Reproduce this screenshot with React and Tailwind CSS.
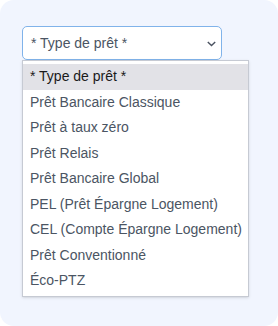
import React from 'react';

const options = [
  '* Type de prêt *',
  'Prêt Bancaire Classique',
  'Prêt à taux zéro',
  'Prêt Relais',
  'Prêt Bancaire Global',
  'PEL (Prêt Épargne Logement)',
  'CEL (Compte Épargne Logement)',
  'Prêt Conventionné',
  'Éco-PTZ',
];

const App = () => {
  return (
    <div className="min-h-screen bg-white font-['Liberation_Sans',Arial,sans-serif]">
      <div className="h-[326px] w-full rounded-[14px] bg-[#f1f5fe] pt-[26px] pl-[22px]">
        <div className="relative w-[200px]">
          <div className="flex h-[34px] items-center justify-between rounded-[5px] border border-[#80b3ea] bg-white pl-[8px] pr-[5px] text-[14px] text-[#4b5563]">
            <span>* Type de prêt *</span>
            <svg width="9" height="6" viewBox="0 0 9 6" fill="none" className="mt-[1px]">
              <path d="M0.8 1l3.7 3.6L8.2 1" stroke="#4a5260" strokeWidth="1.4" />
            </svg>
          </div>
          <div className="absolute left-0 top-[34px] w-[227px] border border-[#c6cad3] bg-white pt-[3px] pb-[2px] shadow-sm">
            {options.map((opt, i) => (
              <div
                key={opt}
                className={
                  i === 0
                    ? 'flex h-[25.5px] items-center bg-[#e2e2e7] pl-[7px] text-[14px] text-[#1a1a1a]'
                    : 'flex h-[25.5px] items-center pl-[7px] text-[14px] text-[#4b5563]'
                }
              >
                {opt}
              </div>
            ))}
          </div>
        </div>
      </div>
    </div>
  );
};

export default App;
